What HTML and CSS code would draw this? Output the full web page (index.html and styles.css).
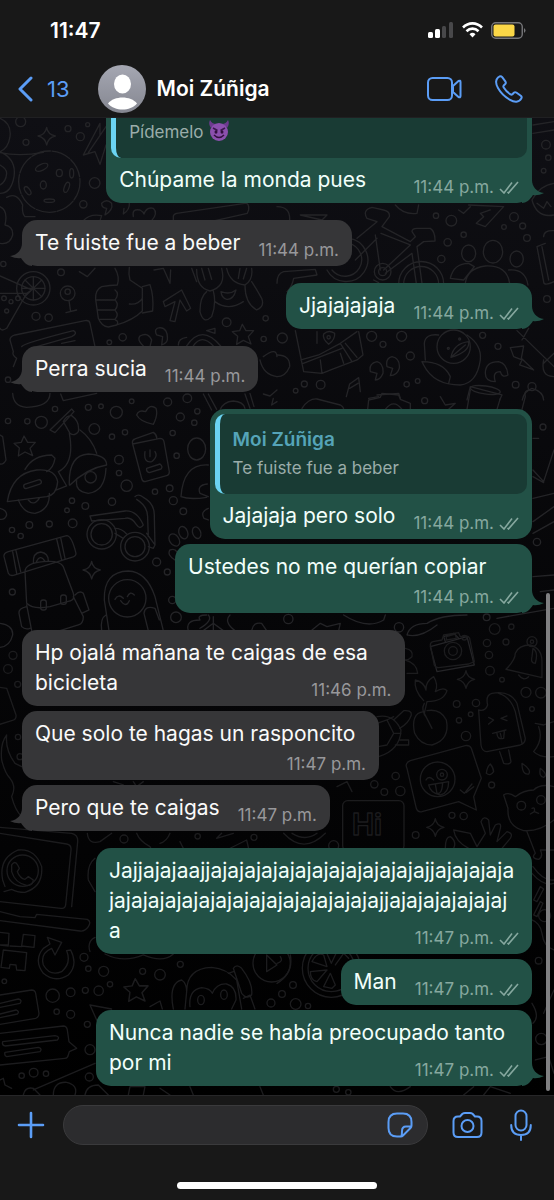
FILE: index.html
```html
<!DOCTYPE html>
<html lang="es">
<head>
<meta charset="utf-8">
<meta name="viewport" content="width=device-width, initial-scale=1">
<title>Moi Zúñiga</title>
<link rel="stylesheet" href="styles.css">
</head>
<body>
<svg class="defs" aria-hidden="true">
  <symbol id="ticks" viewBox="0 0 20 13"><path d="M1 8 5 12 13 1.500M8.500 11 9.500 12 19 1"/></symbol>
  <symbol id="tail" viewBox="0 0 22 26"><path d="M0 0H10V3C10 9 14 15 22 16C18 18 14 18.500 11 18C8 23 4 26 0 26Z"/></symbol>
  <symbol id="spark" viewBox="-30 -30 60 60" overflow="visible"><path d="M0-26Q3-5 26 0Q5 4 0 27Q-4 5-26 0Q-4-4 0-26Z"/></symbol>
  <symbol id="star" viewBox="-30 -30 60 60" overflow="visible"><path d="M-3-29 8-10 31-10 15 8 23 30 0 19-20 31-17 7-33-7-11-10Z"/></symbol>
</svg>

<header class="top">
  <div class="status">
    <time class="clock">11:47</time>
    <div class="indicators">
      <svg width="26" height="16" viewBox="0 0 26 16" aria-label="Señal"><g fill="#fff"><rect x="0" y="10" width="5" height="6" rx="1.500"/><rect x="7" y="7" width="5" height="9" rx="1.500"/></g><g fill="#48484a"><rect x="14" y="4" width="4" height="12" rx="1.500"/><rect x="21" y="0" width="4" height="16" rx="1.500"/></g></svg>
      <svg width="21" height="16" viewBox="0 0 21 16" fill="none" stroke="#fff" stroke-width="2.600" aria-label="Wi-Fi"><path d="M1 5.500C6.500 0 14.500 0 20 5.500"/><path d="M4.500 9.200C8 5.800 13 5.800 16.500 9.200"/><path d="M7.500 12.200Q10.500 9.500 13.500 12.200L10.500 15.500Z" fill="#fff" stroke="none"/></svg>
      <svg width="35" height="17" viewBox="0 0 35 17" aria-label="Batería"><rect x=".75" y=".75" width="30.500" height="15.500" rx="4" fill="none" stroke="#77777a" stroke-width="1.400"/><rect x="2.500" y="2.500" width="21" height="12" rx="2" fill="#fbd747"/><path d="M33 6Q36 8.500 33 11Z" fill="#77777a"/></svg>
    </div>
  </div>
  <div class="contact">
    <a class="back" href="#chats" aria-label="Volver, 13 chats"><svg width="15" height="26" viewBox="0 0 15 26"><path d="M13 2 2 13 13 24" stroke-width="3"/></svg><span>13</span></a>
    <svg class="avatar" viewBox="0 0 48 48" role="img" aria-label="Foto de perfil"><defs><linearGradient id="av" x2="0" y2="1"><stop stop-color="#a5a7b2"/><stop offset="1" stop-color="#858791"/></linearGradient></defs><circle cx="24" cy="24" r="24" fill="url(#av)"/><ellipse cx="24.500" cy="19" rx="8.500" ry="9.500" fill="#fff"/><path d="M10 38.500C16 30.500 33 30.500 39 38.500C32 46.500 17 46.500 10 38.500Z" fill="#fff"/></svg>
    <h1 class="name">Moi Zúñiga</h1>
    <button class="icon" aria-label="Videollamada"><svg width="35" height="24" viewBox="0 0 35 24"><rect x="1" y="1" width="24" height="22" rx="4.500"/><path d="M26 9 31.500 4Q33.500 3 33.500 5V19Q33.500 21 31.500 20L26 15Z"/></svg></button>
    <button class="icon" aria-label="Llamar"><svg width="28" height="28" viewBox="0 0 28 28"><path d="M3 2.500 4.500 1.500Q6 .8 7.200 2.200L10.500 6.700Q11.300 8 10 9.200L8.700 10.500Q8 11.500 8.700 12.500C10.500 15.500 12.500 17.500 15.500 19.300Q16.500 20 17.500 19.200L18.800 17.800Q20 16.700 21.300 17.500L25.800 20.800Q27.200 22 26.300 23.500C24 27.500 19.500 27.500 15 24.800C10 22 5.500 17.500 3 13C.5 8.500 .5 4.800 3 2.500Z"/></svg></button>
  </div>
</header>

<main class="chat">
  <svg class="wallpaper" viewBox="0 118 554 977" preserveAspectRatio="xMidYMin slice" aria-hidden="true">
    <g transform="translate(0 110) scale(.3333)">
      <circle cx="148" cy="215" r="92" stroke-dasharray="58 5"/><ellipse cx="125" cy="172" rx="20" ry="9" transform="rotate(-25 125 172)"/><ellipse cx="178" cy="189" rx="9" ry="11"/><ellipse cx="215" cy="190" rx="6" ry="14"/><ellipse cx="83" cy="242" rx="7" ry="14" transform="rotate(-35 83 242)"/><ellipse cx="130" cy="225" rx="9" ry="12"/><ellipse cx="200" cy="232" rx="7" ry="16" transform="rotate(20 200 232)"/><ellipse cx="148" cy="272" rx="16" ry="5"/>
      <path d="M0 25Q35 40 30 80Q25 115 0 125Q55 150 40 210Q30 250 0 250M0 128Q60 140 130 127M0 165Q20 175 20 190Q18 215 0 225M0 290Q25 300 15 345Q40 350 38 375Q30 405 0 400M20 262Q50 245 68 285Q65 310 75 320L105 320"/>
      <use href="#spark" x="110" y="48" width="60" height="60"/><path d="M300 40 250 135 285 125 300 163 318 105M300 40V75M265 128 318 50"/>
      <path d="M305 280Q320 265 335 280Q340 300 315 315L320 295Q305 295 305 280ZM360 278Q375 262 388 278Q390 300 370 312L372 295M400 320Q395 295 420 300Q430 305 432 312Q440 290 460 295Q475 310 455 332M520 332V320Q520 312 530 310L735 280Q748 278 746 300L742 310 645 332M250 332Q270 310 305 317L300 332"/>
      <circle cx="100" cy="535" r="50"/><circle cx="100" cy="535" r="35"/><path d="M100 500V570M65 535H135M75 510 125 560M75 560 125 510M0 498 95 540 80 550 20 655Q5 665 0 655M0 550H80"/><circle cx="12" cy="565" r="7"/><circle cx="33" cy="575" r="6"/><circle cx="54" cy="565" r="7"/><circle cx="20" cy="603" r="6"/>
      <circle cx="203" cy="550" r="22"/><circle cx="203" cy="545" r="8"/><path d="M207 572 212 605M198 608 230 600"/>
      <path d="M345 475Q360 500 352 525Q330 525 305 530Q285 540 287 568L295 625Q305 650 325 651L350 645Q400 630 427 603V535L390 510Q385 490 388 472M287 570H345Q360 550 345 540M293 600H345Q358 585 347 572M300 628H345Q358 615 346 602M350 645Q358 635 346 630M427 530 450 524Q462 560 458 603L427 609M388 582Q415 585 427 565"/>
      <path d="M490 575 545 540 572 595 560 603 540 570 525 635 510 632 525 575 495 590ZM462 480 490 475 510 520 512 480M238 485 262 500 285 475"/>
      <path d="M590 478Q590 535 630 543Q680 530 665 475M680 475Q690 520 735 525Q760 510 755 475M575 475 590 515M605 475 615 510M625 475 635 508M720 475 715 505M740 475 730 507M620 545Q600 560 600 605Q610 645 635 620Q650 580 640 543M735 525Q735 580 770 600Q795 590 785 565Q765 530 755 515M645 575Q685 605 730 575M663 545Q690 555 708 540Q700 570 680 568Q665 565 663 545Z"/>
      <path d="M40 770 50 745Q35 735 40 725L30 690Q30 680 45 675L255 632Q268 630 270 640L285 710M65 710Q70 700 220 662Q235 670 215 680L110 710M185 700 225 692"/>
      <use href="#star" x="700" y="642" width="60" height="60"/><path d="M430 708Q410 690 420 678Q445 665 455 690L450 710M470 675Q460 655 480 653Q505 655 502 690Q500 700 485 705L488 680ZM535 705Q535 685 560 682M560 708Q605 640 662 708M580 708Q605 670 640 708M620 662 645 655V670ZM790 740Q830 710 831 740M780 750Q790 795 831 800"/>
      <g><circle cx="62" cy="35" r="15"/><circle cx="204" cy="56" r="9"/><circle cx="241" cy="80" r="12"/><circle cx="78" cy="97" r="9"/><circle cx="263" cy="44" r="6"/><circle cx="284" cy="219" r="16"/><circle cx="250" cy="283" r="11"/><circle cx="10" cy="462" r="8"/><circle cx="183" cy="487" r="10"/><circle cx="108" cy="619" r="12"/><circle cx="146" cy="623" r="11"/><circle cx="368" cy="682" r="11"/><circle cx="328" cy="697" r="7"/><circle cx="680" cy="637" r="13"/><circle cx="797" cy="625" r="8"/><circle cx="791" cy="687" r="8"/><circle cx="24" cy="809" r="8"/></g>
    </g>
    <g transform="translate(277 110) scale(.3333)">
      <path d="M215 385A65 65 0 1 1 150 480M215 400A50 50 0 1 1 165 480M365 522A65 65 0 0 1 500 522M380 522A50 50 0 0 1 485 522M240 385 300 335 270 325Q255 300 285 292L320 300Q340 305 337 320L315 350 400 395 415 380 405 365Q405 355 420 355H460Q475 365 474 393L440 395 420 410 435 520M295 375 310 480M312 370 400 405 320 480M235 450 300 385M325 490 405 430 418 520M290 510 305 518M70 315H150L135 330ZM0 290Q40 290 38 330M355 285Q380 315 420 310L425 285M545 300 560 310 580 290M575 285 680 290 625 350 598 340 620 320 610 310 640 300M0 520Q0 490 20 485L115 478 120 495 50 505Q45 530 30 545"/><circle cx="317" cy="485" r="12"/><circle cx="317" cy="485" r="25"/>
      <ellipse cx="575" cy="430" rx="21" ry="25"/><ellipse cx="648" cy="425" rx="29" ry="34"/><ellipse cx="719" cy="447" rx="20" ry="24"/><path d="M565 520Q570 475 625 468Q690 465 698 520M520 505Q530 460 575 460L592 470 560 510ZM695 480Q745 475 753 525"/>
      <path d="M768 45 831 35M768 70 831 60M765 270Q790 225 831 220M765 270Q780 325 831 315M780 280 800 295 810 275 822 290M800 380Q800 360 831 362M780 410 805 400M780 410 800 515Q800 530 831 515M795 410 815 510"/>
      <path d="M55 662 80 785 135 790 165 778 240 750 258 735 245 665M72 750 125 735 190 700 240 665M75 762 195 715M190 700 225 755M205 700 240 742M120 665V700M130 750 135 790M190 730 200 760M155 703Q135 685 140 672Q155 658 173 670Q175 688 155 703Z"/><circle cx="155" cy="682" r="5"/>
      <circle cx="530" cy="710" r="50"/><path d="M485 675Q445 670 442 700L445 750M570 675Q615 705 610 750Q600 820 550 825Q470 825 440 765L435 755Q500 755 520 800L515 820M522 742Q530 700 575 695Q580 725 522 742ZM522 742 565 705"/><circle cx="514" cy="715" r="3"/><circle cx="548" cy="687" r="3"/>
      <path d="M280 785Q275 760 300 755Q320 760 318 790Q310 810 295 810L300 790ZM330 770Q325 745 345 740Q370 745 367 775Q360 797 340 797L347 775ZM208 860 218 822 245 803 250 845M218 835 243 820M0 735Q40 735 38 770Q25 800 0 800M700 713 740 708 733 745 770 780 728 765 735 750 710 740ZM625 790Q625 755 665 755Q690 760 693 795Q675 805 670 785Q645 785 655 815Q625 815 625 790ZM800 760 831 730M720 662 831 770M735 690 755 655M800 750Q790 800 831 800M570 870 580 830 675 855 668 870M736 870Q740 845 765 835Q800 845 800 870M300 855 365 850 370 865M275 865 305 860"/><circle cx="765" cy="830" r="12"/><ellipse cx="625" cy="840" rx="45" ry="12" transform="rotate(8 625 840)"/>
      <g><circle cx="807" cy="104" r="13"/><circle cx="814" cy="143" r="8"/><circle cx="800" cy="182" r="7"/><circle cx="523" cy="332" r="16"/><circle cx="477" cy="317" r="8"/><circle cx="711" cy="321" r="13"/><circle cx="737" cy="348" r="9"/><circle cx="681" cy="351" r="7"/><circle cx="750" cy="384" r="10"/><circle cx="560" cy="374" r="8"/><circle cx="512" cy="397" r="11"/><circle cx="493" cy="447" r="11"/><circle cx="810" cy="567" r="10"/><circle cx="16" cy="684" r="15"/><circle cx="284" cy="679" r="15"/><circle cx="318" cy="703" r="9"/><circle cx="374" cy="679" r="15"/><circle cx="617" cy="676" r="9"/><circle cx="663" cy="709" r="9"/><circle cx="400" cy="738" r="12"/><circle cx="82" cy="822" r="9"/><circle cx="131" cy="824" r="13"/><circle cx="389" cy="823" r="8"/><circle cx="422" cy="813" r="7"/><circle cx="716" cy="824" r="10"/><circle cx="56" cy="842" r="7"/></g>
    </g>
    <g transform="translate(0 390) scale(.3333)">
      <path d="M38 10Q40 50 80 52Q150 50 150 10M182 12 190 32 290 10M150 120 215 57 222 65 165 128ZM190 95Q200 75 215 77Q240 95 235 125Q225 140 210 130ZM208 130Q225 220 175 245L200 288 170 300M240 120Q275 145 290 190M75 238Q100 195 155 195L165 205Q160 235 140 245M22 335Q35 250 110 240Q165 235 173 275Q170 315 140 320ZM208 285Q205 195 265 192Q320 195 320 225Q260 235 210 285ZM55 330Q70 370 105 370Q150 360 148 310M230 272Q225 305 265 310Q315 305 318 235M85 330Q100 350 118 325"/><rect x="70" y="276" width="55" height="13" rx="7" transform="rotate(-18 97 282)"/><circle cx="272" cy="262" r="17"/>
      <use href="#star" x="45" y="137" width="60" height="60"/><path d="M410 75Q415 58 437 65Q450 40 468 55Q475 75 460 103Q420 95 410 75ZM398 162 480 145Q490 145 492 155L508 245Q508 255 500 257L435 275Q427 275 425 265ZM398 162Q395 150 405 147L460 127Q472 135 470 147M435 185Q430 220 455 215Q475 200 465 185M450 180V200M440 235 480 222Q490 230 483 237L448 248Q438 245 440 235ZM0 135 8 140 18 210Q10 225 0 222"/>
      <circle cx="305" cy="433" r="32"/><circle cx="305" cy="433" r="44"/><circle cx="405" cy="470" r="30"/><circle cx="405" cy="470" r="43"/><path d="M270 378 375 363Q410 360 430 405Q420 420 410 405Q395 380 375 385L275 393ZM345 415Q365 415 380 432M345 430 370 445M440 430 465 465 460 475 445 470M405 320Q415 310 430 322Q465 340 463 380L465 465M410 328Q445 350 443 385L445 440"/>
      <path d="M12 500Q10 490 25 485L200 437Q215 437 228 490Q228 500 215 502L45 555Q30 560 25 550ZM38 485 50 550M48 482 62 545M170 447 185 510M182 443 195 505M100 520Q98 488 122 486Q145 490 145 512M108 518Q120 490 135 514M75 545Q75 520 130 515Q180 510 190 530L220 610Q225 630 210 633L150 650Q100 660 80 640ZM80 645 95 722M220 620 250 680Q250 700 235 705L180 722M225 615Q240 600 250 610L267 660 245 670M80 650Q55 655 57 670L65 710Q75 720 90 715"/><rect x="122" y="630" width="17" height="30" rx="7"/><rect x="182" y="615" width="17" height="28" rx="7"/>
      <use href="#spark" x="245" y="510" width="60" height="60"/><circle cx="382" cy="625" r="56"/><path d="M327 722 313 630Q310 545 385 543Q440 545 465 620L490 722M305 722Q300 685 318 675M445 722 432 670Q435 645 465 655L478 690M345 628Q355 610 370 625M382 620Q390 602 403 615M362 632Q378 655 388 632"/>
      <ellipse cx="590" cy="177" rx="27" ry="33"/><path d="M625 225Q550 220 543 320Q570 330 620 322M625 320 600 310Q590 285 622 282M625 355Q600 365 612 385L625 390M610 12 635 60M625 12 650 58M735 12 750 55M750 10 762 50M660 60Q670 35 700 33Q730 35 735 55M790 12 810 18 831 0M820 25 815 45 831 35"/><ellipse cx="523" cy="450" rx="14" ry="20" transform="rotate(-35 523 450)"/><ellipse cx="550" cy="428" rx="13" ry="19" transform="rotate(-20 550 428)"/><ellipse cx="590" cy="428" rx="12" ry="18" transform="rotate(-20 590 428)"/><path d="M525 510Q500 495 510 480Q525 475 530 485M565 722Q555 690 600 690Q590 675 620 675M600 715Q640 690 625 675M690 675Q670 695 705 722M610 722 640 700 670 722M640 680V722M755 722Q760 695 785 700L800 722M0 700Q40 705 38 735Q30 770 0 772M0 355Q20 360 20 375Q15 390 0 388"/>
      <g><circle cx="165" cy="57" r="8"/><circle cx="265" cy="52" r="9"/><circle cx="303" cy="49" r="7"/><circle cx="349" cy="67" r="18"/><circle cx="395" cy="34" r="7"/><circle cx="503" cy="36" r="12"/><circle cx="562" cy="25" r="13"/><circle cx="541" cy="81" r="12"/><circle cx="592" cy="64" r="8"/><circle cx="583" cy="98" r="8"/><circle cx="24" cy="93" r="8"/><circle cx="82" cy="94" r="8"/><circle cx="124" cy="97" r="18"/><circle cx="283" cy="117" r="16"/><circle cx="336" cy="140" r="8"/><circle cx="375" cy="127" r="8"/><circle cx="518" cy="129" r="8"/><circle cx="357" cy="209" r="13"/><circle cx="357" cy="249" r="8"/><circle cx="530" cy="197" r="8"/><circle cx="380" cy="287" r="17"/><circle cx="465" cy="305" r="8"/><circle cx="509" cy="295" r="10"/><circle cx="520" cy="332" r="12"/><circle cx="550" cy="364" r="10"/><circle cx="216" cy="332" r="8"/><circle cx="256" cy="348" r="10"/><circle cx="201" cy="361" r="7"/><circle cx="336" cy="335" r="11"/><circle cx="218" cy="400" r="13"/><circle cx="148" cy="402" r="9"/><circle cx="88" cy="405" r="10"/><circle cx="36" cy="420" r="8"/><circle cx="62" cy="438" r="8"/><circle cx="470" cy="516" r="12"/><circle cx="502" cy="546" r="9"/><circle cx="517" cy="630" r="11"/><circle cx="528" cy="682" r="16"/><circle cx="37" cy="606" r="9"/></g>
    </g>
    <g transform="translate(277 390) scale(.3333)">
      <path d="M75 55Q95 25 120 27L190 45Q200 50 200 58M272 58 275 30 310 22 315 10 365 15 370 28 400 40V58M325 58Q350 25 375 58M490 20 505 45 535 40 515 58M570 58 580 0M670 25 660 58M735 58 745 20Q740 0 760 0M768 145H785M768 240 800 275 831 180M768 260 800 278M768 325 831 310M768 395 831 350M768 430 831 395M768 560 831 555M790 605 831 600M660 685 831 655M105 720 130 700 150 710 190 700 185 722M200 675Q270 720 320 690L325 675M390 735Q400 700 450 700Q490 675 570 675M390 735Q430 745 480 705M460 770 570 740 592 825 480 845ZM505 755 500 740 530 730 545 745"/>
      <g><circle cx="443" cy="32" r="9"/><circle cx="798" cy="111" r="9"/><circle cx="780" cy="456" r="11"/><circle cx="34" cy="687" r="14"/><circle cx="366" cy="712" r="14"/><circle cx="629" cy="682" r="10"/></g>
    </g>
    <g class="faint" transform="translate(277 620) scale(.3333)">
      <path d="M460 75Q460 67 468 65L495 60 500 45 545 38 550 50 568 48Q575 48 578 55L592 125 575 132 485 143Q475 143 472 135ZM508 60V50L535 42 538 55Z"/><circle cx="528" cy="93" r="26"/><circle cx="528" cy="93" r="13"/><circle cx="562" cy="53" r="7"/>
      <path d="M687 148Q715 120 715 100Q725 75 760 75Q795 85 795 125V173ZM725 165Q740 185 755 170M768 85Q785 95 775 130Q760 130 765 110Z"/><circle cx="765" cy="65" r="15"/><circle cx="765" cy="65" r="5"/><use href="#spark" x="537" y="148" width="60" height="60"/>
      <path d="M385 85Q410 90 405 110Q395 120 385 120Q420 130 422 160L390 160M440 242Q410 210 415 180Q440 185 447 210Q445 185 470 170Q485 195 475 215Q500 200 510 212Q500 245 450 245L442 280 465 325M442 250Q430 270 450 295M440 275Q400 280 413 340Q430 375 465 375Q520 360 508 300Q490 265 450 272M300 290Q350 280 372 330Q370 390 305 410M300 310 330 300 350 340 330 375 303 380M330 300 350 290M350 340 372 340M350 300 380 272Q405 270 403 285Q395 310 368 325M368 360 395 360V375L355 375"/>
      <path d="M605 270Q625 275 632 255Q625 225 645 220Q700 210 720 250L745 355Q745 370 730 375L630 395Q615 395 612 375ZM665 220Q700 230 715 275L735 370M668 395 680 430Q700 435 702 425L695 390M635 292 650 300 635 312M690 288 672 295 690 302M647 340 687 330M660 340Q660 360 680 355L682 335M670 340 673 352"/>
      <path d="M390 445Q382 430 400 422L565 377Q578 375 583 385L613 475 590 530 598 570 545 545 435 575Q422 578 418 565ZM550 510 562 520 585 492M567 518 590 500"/><circle cx="482" cy="478" r="52"/><circle cx="495" cy="464" r="16"/><circle cx="495" cy="464" r="5"/><path d="M447 480Q455 465 470 480M455 495 515 485Q515 520 490 525Q460 520 455 495ZM475 493 480 520Q495 525 497 488"/>
      <rect x="197" y="542" width="184" height="150" rx="15"/><text class="hi" x="225" y="646">Hi</text>
      <use href="#spark" x="445" y="592" width="60" height="60"/><path d="M640 432Q650 445 650 455Q640 470 628 460Q630 440 640 432ZM735 430Q765 450 755 462Q735 465 735 430ZM790 445Q815 465 800 472Q785 470 790 445ZM530 630 580 640 600 680 625 640 612 605Q620 585 635 600L640 645 655 615Q675 605 670 625L660 665 690 635Q710 640 700 655L675 685M530 630Q535 665 575 685M505 685Q505 650 520 650Q540 665 530 685M680 525Q695 515 715 530Q740 510 770 510 790 490 831 500M680 525 693 565Q690 620 740 632Q790 635 831 600M765 565Q775 560 772 575L760 582M772 575 785 580M750 635 775 700Q760 715 785 718Q800 710 790 690L831 690M775 310 800 315 831 305M785 320Q800 360 770 395Q790 415 831 410M20 640Q80 705 145 640M45 640Q85 665 120 640M180 500 210 485 225 515M768 740Q800 785 831 780M770 885 790 845 798 850 780 890Z"/><circle cx="733" cy="557" r="13"/><circle cx="792" cy="540" r="13"/>
      <g><circle cx="653" cy="27" r="16"/><circle cx="703" cy="20" r="8"/><circle cx="630" cy="69" r="11"/><circle cx="687" cy="66" r="9"/><circle cx="636" cy="105" r="11"/><circle cx="639" cy="152" r="13"/><circle cx="675" cy="179" r="7"/><circle cx="747" cy="217" r="15"/><circle cx="792" cy="218" r="16"/><circle cx="765" cy="267" r="7"/><circle cx="539" cy="252" r="10"/><circle cx="597" cy="249" r="11"/><circle cx="581" cy="283" r="7"/><circle cx="546" cy="301" r="8"/><circle cx="567" cy="348" r="14"/><circle cx="356" cy="468" r="11"/><circle cx="292" cy="493" r="11"/><circle cx="322" cy="516" r="10"/><circle cx="370" cy="513" r="14"/><circle cx="644" cy="495" r="9"/><circle cx="525" cy="586" r="9"/><circle cx="560" cy="588" r="11"/><circle cx="416" cy="645" r="10"/><circle cx="170" cy="677" r="15"/></g>
    </g>
    <g class="faint" transform="translate(0 620) scale(.3333)">
      <path d="M0 202 20 205 48 285Q50 300 35 302L0 313M20 345Q0 370 5 420Q15 460 30 475 50 500 35 530 45 570 65 590M20 345Q15 390 45 430L65 440M262 640Q265 675 300 665L335 640M410 640Q420 665 450 680L455 690M510 640Q500 665 480 670M540 665 550 685 580 690M650 655 665 640M650 655 700 640M680 690 740 660 747 690M285 715Q260 735 265 780L285 815M340 485 370 495M400 485 410 500 430 485"/>
      <path d="M0 622 215 640Q235 645 233 665L215 860M0 640 200 672Q215 675 213 690L197 855Q195 867 183 865L0 845M0 875 60 890 105 893 110 883 262 898Q275 905 265 920 255 935 240 933L0 902"/><circle cx="68" cy="752" r="47"/><path d="M15 800 8 780Q-5 715 55 690Q105 685 125 740Q130 800 75 817Q50 817 35 808L12 815M35 735Q45 720 53 735L58 745 52 755Q60 775 75 778L85 770 100 780Q98 797 82 797Q45 790 35 755Z"/>
      <circle cx="39" cy="106" r="12"/><circle cx="24" cy="147" r="13"/><circle cx="53" cy="193" r="9"/><circle cx="54" cy="351" r="8"/><circle cx="60" cy="410" r="9"/><circle cx="372" cy="657" r="12"/><circle cx="593" cy="649" r="8"/><circle cx="762" cy="652" r="9"/>
    </g>
    <g class="faint" transform="translate(0 840) scale(.3333)">
      <path d="M0 277 27 280 25 315H0M70 283 105 287 102 322 65 318ZM0 315 25 318M30 318 65 320M10 330 80 338 75 392 50 390 48 375 30 373 28 385 3 382ZM142 292 185 307 165 345 155 325Q120 340 130 375Q150 410 185 395Q215 370 200 332L212 330Q235 375 205 405Q165 430 130 400Q100 360 130 325L150 312Z"/>
      <path d="M0 465 95 450Q105 450 107 460L117 520Q117 532 107 535L0 553M0 490 55 477Q68 480 60 490L0 502M0 522 48 510Q60 515 52 522L0 533M0 580 190 558Q200 558 202 570L207 605 230 625 208 635 205 645Q203 655 195 655L0 675M8 605 165 587Q182 590 172 600L15 618Q5 615 8 605ZM15 637 115 622Q128 625 120 635L20 650Q12 647 15 637Z"/>
      <use href="#star" x="375" y="415" width="68" height="68"/><path d="M270 495 335 507M270 495 290 540M450 500 480 483 487 507M560 455Q560 385 635 382Q680 385 710 420L725 507M570 500Q565 450 605 443Q630 445 637 460Q650 430 680 432Q710 440 708 480L695 507M520 507Q505 430 545 420Q560 430 560 455L555 507M700 385Q710 370 725 385Q760 430 755 465Q740 480 725 460ZM685 400 700 395M730 475 750 465 765 507"/><ellipse cx="603" cy="480" rx="10" ry="14"/><ellipse cx="672" cy="464" rx="10" ry="14"/><path d="M100 750 285 670M160 765Q160 725 200 727Q235 735 225 765M255 765Q260 735 295 735L325 765M270 335Q260 305 285 292M315 342Q370 370 430 345 490 370 520 342M0 720 10 715 15 735 35 745M70 765Q75 740 100 745L120 765M385 765 390 740 435 740 430 765M480 745 510 765M570 740 580 765M780 740 790 765"/>
      <g><circle cx="815" cy="370" r="56"/><path d="M800 345 831 375 800 395Z"/><circle cx="252" cy="352" r="12"/><circle cx="265" cy="386" r="8"/><circle cx="311" cy="394" r="15"/><circle cx="428" cy="394" r="9"/><circle cx="480" cy="404" r="16"/><circle cx="541" cy="373" r="9"/><circle cx="330" cy="433" r="8"/><circle cx="296" cy="452" r="14"/><circle cx="256" cy="451" r="9"/><circle cx="212" cy="457" r="13"/><circle cx="158" cy="467" r="20"/><circle cx="170" cy="515" r="8"/><circle cx="212" cy="523" r="12"/><circle cx="262" cy="553" r="9"/><circle cx="270" cy="629" r="15"/><circle cx="268" cy="711" r="12"/><circle cx="138" cy="701" r="8"/><circle cx="101" cy="698" r="13"/><circle cx="65" cy="707" r="8"/><circle cx="13" cy="424" r="7"/><circle cx="813" cy="489" r="12"/></g>
    </g>
    <g class="faint" transform="translate(277 840) scale(.3333)">
      <circle cx="163" cy="385" r="87"/><circle cx="163" cy="385" r="70"/><path d="M163 370 145 330Q165 315 182 330ZM150 380 105 365Q120 335 140 345ZM150 390 100 395Q100 420 120 425ZM160 400 140 440 165 445 175 435ZM175 375 200 340 215 355M0 430Q50 400 40 345M0 370Q20 365 10 350M765 100Q800 140 831 130M770 180 790 140 800 147 780 185ZM765 240Q790 250 795 280 800 320 831 330M765 490Q790 530 768 550M775 660 815 650 831 700M800 520 831 450M340 740Q360 770 400 740M560 765 590 740M620 765 640 740 700 760"/>
      <circle cx="48" cy="435" r="10"/><circle cx="15" cy="462" r="10"/><circle cx="56" cy="492" r="16"/><circle cx="93" cy="498" r="8"/><circle cx="785" cy="362" r="10"/><circle cx="803" cy="227" r="18"/><circle cx="793" cy="597" r="17"/><circle cx="178" cy="748" r="9"/><circle cx="214" cy="757" r="8"/>
    </g>
  </svg>

  <ol class="messages">
    <li class="bubble out quoted w-83 end">
      <blockquote class="quote"><p>Pídemelo <svg class="emoji" viewBox="0 0 22 22" role="img" aria-label="😈"><path d="M3 8Q0 4 2 0Q4 4 8 4ZM19 8Q22 4 20 0Q18 4 14 4Z" fill="#6d3a8f"/><circle cx="11" cy="12" r="9" fill="#8b50ae"/><path d="M5 8 9.500 10.500M17 8 12.500 10.500" stroke="#3c1850" stroke-width="1.500"/><ellipse cx="8" cy="12" rx="1.500" ry="1.800" fill="#32103f"/><ellipse cx="14" cy="12" rx="1.500" ry="1.800" fill="#32103f"/><path d="M6 15Q11 20 16 15" fill="none" stroke="#32103f" stroke-width="1.500"/></svg></p></blockquote>
      <div class="line"><p>Chúpame la monda pues</p><span class="meta"><time>11:44 p.m.</time><svg><use href="#ticks"/></svg></span></div>
      <svg class="tail"><use href="#tail"/></svg>
    </li>
    <li class="bubble in end"><div class="line"><p>Te fuiste fue a beber</p><span class="meta"><time>11:44 p.m.</time></span></div><svg class="tail"><use href="#tail"/></svg></li>
    <li class="bubble out end"><div class="line"><p>Jjajajajaja</p><span class="meta"><time>11:44 p.m.</time><svg><use href="#ticks"/></svg></span></div><svg class="tail"><use href="#tail"/></svg></li>
    <li class="bubble in end"><div class="line"><p>Perra sucia</p><span class="meta"><time>11:44 p.m.</time></span></div><svg class="tail"><use href="#tail"/></svg></li>
    <li class="bubble out quoted">
      <blockquote class="quote"><cite>Moi Zúñiga</cite><p>Te fuiste fue a beber</p></blockquote>
      <div class="line"><p>Jajajaja pero solo</p><span class="meta"><time>11:44 p.m.</time><svg><use href="#ticks"/></svg></span></div>
    </li>
    <li class="bubble out w-70 end"><div class="line stacked"><p>Ustedes no me querían copiar</p><span class="meta"><time>11:44 p.m.</time><svg><use href="#ticks"/></svg></span></div><svg class="tail"><use href="#tail"/></svg></li>
    <li class="bubble in w-75"><div class="line shared"><p>Hp ojalá mañana te caigas de esa<br>bicicleta</p><span class="meta"><time>11:46 p.m.</time></span></div></li>
    <li class="bubble in w-70"><div class="line stacked"><p>Que solo te hagas un rasponcito</p><span class="meta"><time>11:47 p.m.</time></span></div></li>
    <li class="bubble in end"><div class="line"><p>Pero que te caigas</p><span class="meta"><time>11:47 p.m.</time></span></div><svg class="tail"><use href="#tail"/></svg></li>
    <li class="bubble out w-85"><div class="line shared"><p>Jajjajajaajjajajajajajajajajajajajajajjajajajaja<br>jajajajajajajajajajajajajajajajajjajajajajajajaj<br>a</p><span class="meta"><time>11:47 p.m.</time><svg><use href="#ticks"/></svg></span></div></li>
    <li class="bubble out"><div class="line"><p>Man</p><span class="meta"><time>11:47 p.m.</time><svg><use href="#ticks"/></svg></span></div></li>
    <li class="bubble out w-85"><div class="line shared"><p>Nunca nadie se había preocupado tanto<br>por mi</p><span class="meta"><time>11:47 p.m.</time><svg><use href="#ticks"/></svg></span></div><svg class="tail"><use href="#tail"/></svg></li>
  </ol>
  <div class="scrollbar"></div>
</main>

<footer class="composer">
  <form class="tools">
    <button class="icon" type="button" aria-label="Adjuntar"><svg width="28" height="28" viewBox="0 0 28 28"><path d="M14 2V26M2 14H26" stroke-width="2.600"/></svg></button>
    <div class="field">
      <input type="text" aria-label="Mensaje">
      <button class="icon" type="button" aria-label="Stickers"><svg width="26" height="26" viewBox="0 0 26 26"><path d="M14 24.500H10Q1.500 24.500 1.500 16V10Q1.500 1.500 10 1.500H16Q24.500 1.500 24.500 10V13.500Q24.500 15 23.500 16L16 23.500Q15 24.500 14 24.500ZM14.500 24Q15 22 15 19Q15 14.500 19 14.500H24.300"/></svg></button>
    </div>
    <button class="icon" type="button" aria-label="Cámara"><svg width="31" height="28" viewBox="0 0 31 28"><path d="M8 5.500 10.500 2.800Q11.500 2 13 2H18Q19.500 2 20.500 2.800L23 5.500H25Q29.500 5.500 29.500 10V21.500Q29.500 26 25 26H6Q1.500 26 1.500 21.500V10Q1.500 5.500 6 5.500Z"/><circle cx="15.500" cy="15" r="6"/></svg></button>
    <button class="icon" type="button" aria-label="Grabar audio"><svg width="22" height="32" viewBox="0 0 22 32"><rect x="5.500" y="1.500" width="11" height="20" rx="5.500"/><path d="M1.200 16Q1.200 26 11 26Q20.800 26 20.800 16M11 26V31"/></svg></button>
  </form>
  <div class="home"></div>
</footer>
</body>
</html>
```
FILE: styles.css
```css
* { box-sizing: border-box; }

body {
  margin: 0;
  height: 100vh;
  display: flex;
  flex-direction: column;
  overflow: hidden;
  background: #181818;
  color: #fff;
  font-family: Inter, Roboto, "Liberation Sans", sans-serif;
}

p, h1, ol, blockquote { margin: 0; padding: 0; }
.defs { position: absolute; width: 0; height: 0; }

/* Header */
.top { border-bottom: 1px solid #202022; }
.status {
  display: flex;
  justify-content: space-between;
  align-items: center;
  height: 60px;
  padding: 0 28px 0 50px;
}
.clock { font-size: 21px; font-weight: 600; }
.indicators { display: flex; align-items: center; gap: 8px; }
.contact {
  display: flex;
  align-items: center;
  height: 57px;
  padding: 0 31px 0 18px;
}
.back {
  display: flex;
  align-items: center;
  gap: 14px;
  margin-right: 28px;
  color: #5b9df6;
  font-size: 22px;
  text-decoration: none;
}
.back svg, .icon svg {
  display: block;
  fill: none;
  stroke: #5b9df6;
  stroke-width: 2;
  stroke-linecap: round;
  stroke-linejoin: round;
}
.avatar { width: 48px; height: 48px; }
.name { margin: 0 auto 0 11px; font-size: 21px; font-weight: 600; }
.icon { padding: 0; border: 0; background: none; }
.contact .icon + .icon { margin-left: 33px; }

/* Conversation */
.chat {
  position: relative;
  flex: 1;
  min-height: 0;
  display: flex;
  flex-direction: column;
  justify-content: flex-end;
  overflow: hidden;
  background: linear-gradient(#0f0f14, #060608 50%, #000);
}
.wallpaper {
  position: absolute;
  inset: 0;
  width: 100%;
  height: 100%;
  fill: none;
  stroke: #242427;
  stroke-width: 4;
  stroke-linejoin: round;
  stroke-linecap: round;
}
.faint { stroke: #1c1c1e; }
.hi { font-size: 88px; font-weight: 700; }
.messages {
  position: relative;
  display: flex;
  flex-direction: column;
  align-items: flex-start;
  gap: 5px;
  padding: 0 22px 9px;
  list-style: none;
}
.bubble {
  position: relative;
  padding: 8px 13px 6px;
  border-radius: 15px;
  font-size: 21px;
  line-height: 30px;
  white-space: nowrap;
}
.end { margin-bottom: 12px; }
.bubble:last-child { margin-bottom: 0; }
.in { background: #363638; color: #fafafa; }
.out { align-self: flex-end; background: #225146; color: #f2fffb; }
.w-70 { width: 70%; }
.w-75 { width: 75%; }
.w-83 { width: 83.5%; }
.w-85 { width: 85.5%; }

.line {
  display: flex;
  align-items: flex-end;
  justify-content: space-between;
  gap: 18px;
}
.line p { margin-bottom: 2px; }
.stacked { flex-direction: column; align-items: stretch; gap: 3px; }
.stacked .meta { align-self: flex-end; }
.shared { display: grid; grid-template-columns: 1fr; }
.shared p, .shared .meta { grid-area: 1 / 1; }
.meta {
  display: flex;
  align-items: center;
  align-self: end;
  justify-self: end;
  gap: 5px;
  font-size: 17px;
  line-height: 20px;
  color: #98989b;
}
.out .meta { color: #86a89f; }
.meta svg {
  width: 20px;
  height: 13px;
  fill: none;
  stroke: #86a89f;
  stroke-width: 1.6;
}

.quoted { padding: 5px 5px 6px; }
.quoted .line { padding: 7px 8px 0; }
.quote {
  display: flex;
  flex-direction: column;
  justify-content: flex-end;
  min-height: 80px;
  padding: 12px 13px;
  border-left: 5px solid #6bd4f3;
  border-radius: 10px;
  background: #193b34;
  color: #9badaa;
  font-size: 17px;
  line-height: 28px;
}
.quote cite {
  color: #55a4b8;
  font-size: 19px;
  font-style: normal;
  font-weight: 600;
}
.emoji { width: 22px; height: 22px; vertical-align: -4px; }

.tail {
  position: absolute;
  right: -12px;
  bottom: 0;
  width: 22px;
  height: 26px;
  fill: #225146;
}
.in .tail { right: auto; left: -12px; transform: scaleX(-1); fill: #363638; }

.scrollbar {
  position: absolute;
  right: 4px;
  bottom: 4px;
  width: 4px;
  height: 51%;
  border-radius: 2px;
  background: #808082;
}

/* Composer */
.composer { border-top: 1px solid #262628; }
.tools {
  display: flex;
  align-items: center;
  padding: 9px 22px 0 17px;
}
.field {
  flex: 1;
  display: flex;
  align-items: center;
  height: 40px;
  margin: 0 24px 0 18px;
  padding: 0 14px 0 18px;
  border: 1px solid #3a3a3c;
  border-radius: 20px;
  background: #2c2c2e;
}
.field input {
  flex: 1;
  min-width: 0;
  padding: 0;
  border: 0;
  outline: 0;
  background: none;
  color: #fff;
  font: inherit;
}
.tools > .icon + .icon { margin-left: 27px; }
.home {
  width: 36%;
  height: 7px;
  margin: 37px auto 11px;
  border-radius: 4px;
  background: #fff;
}
```
